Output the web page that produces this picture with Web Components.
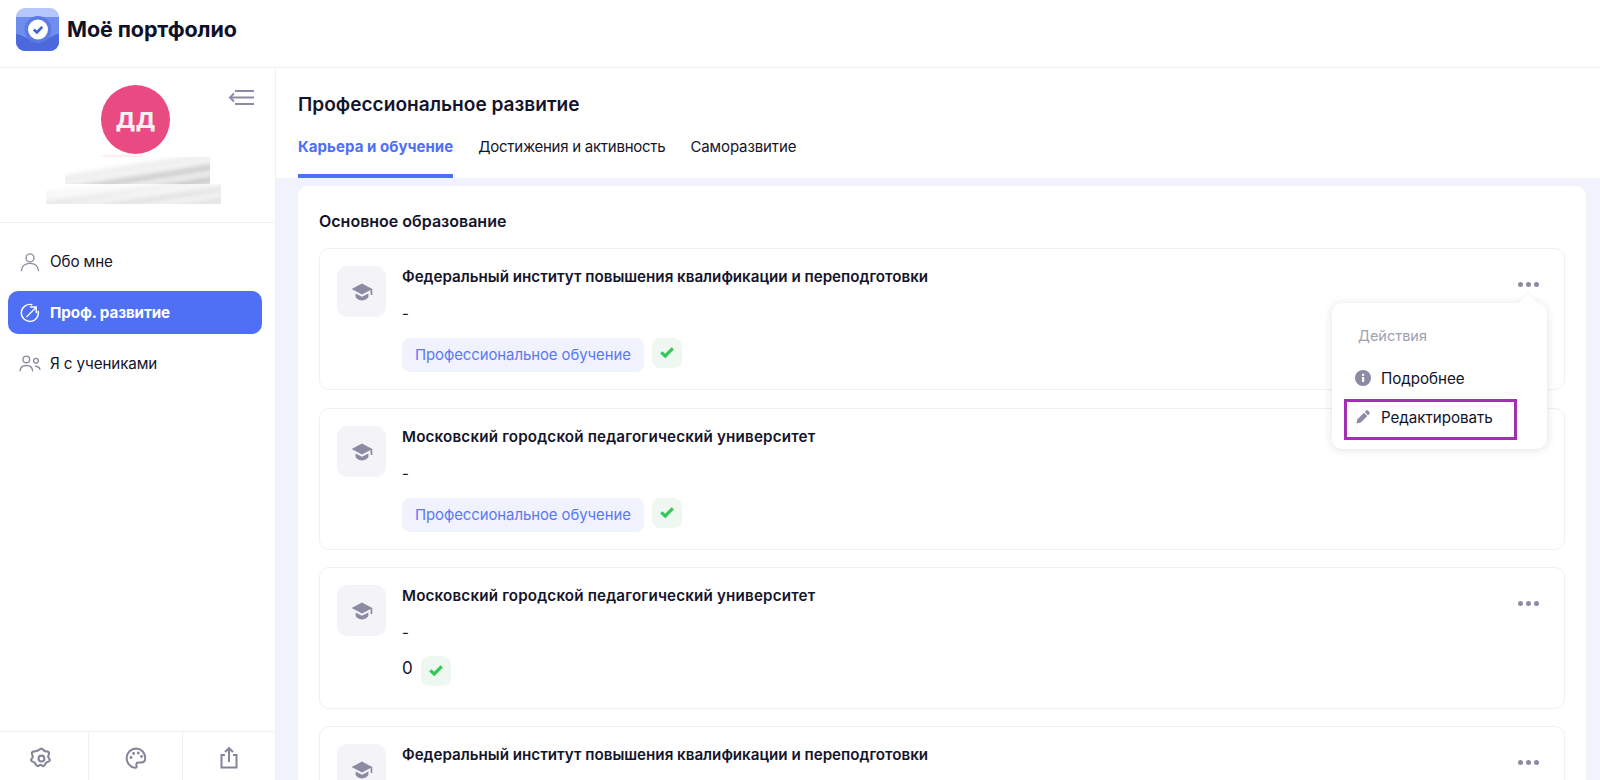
<!DOCTYPE html>
<html lang="ru">
<head>
<meta charset="utf-8">
<title>Моё портфолио</title>
<style>
  html, body { margin: 0; height: 100%; overflow: hidden; }
  body { font-family: Inter, "Noto Sans", sans-serif; color: #14142b; background: #fff; }
</style>
</head>
<body>
<app-shell>
  <top-bar slot="top"></top-bar>
  <side-bar slot="side"></side-bar>
  <page-head slot="head"></page-head>
  <edu-section slot="body" heading="Основное образование">
    <edu-item title-text="Федеральный институт повышения квалификации и переподготовки" tag="Профессиональное обучение" open></edu-item>
    <edu-item title-text="Московский городской педагогический университет" tag="Профессиональное обучение" wide></edu-item>
    <edu-item title-text="Московский городской педагогический университет" plain="0" wide></edu-item>
    <edu-item title-text="Федеральный институт повышения квалификации и переподготовки"></edu-item>
  </edu-section>
</app-shell>

<script>
const CAP = `<svg viewBox="0 0 24 24" width="24" height="24" fill="#8b8ba3"><path d="M12 3.6 1.6 9 12 14.4 20.6 9.9V15h1.7V9L12 3.6Z"/><path d="M5.6 13.4v3.3c0 1 3 3.7 6.4 3.7s6.4-2.7 6.4-3.7v-3.3L12 16.7l-6.4-3.3Z"/></svg>`
const CHECK = `<svg viewBox="0 0 16 16" width="16" height="16"><path d="M2.2 8.4 6.2 12 13.8 4.4" fill="none" stroke="#34c759" stroke-width="3.2"/></svg>`

class AppShell extends HTMLElement {
  constructor () {
    super()
    this.attachShadow({ mode: 'open' }).innerHTML = `
      <style>
        :host { display: grid; grid-template-columns: 275px 1fr; grid-template-rows: 68px 1fr; width: 1600px; height: 780px; overflow: hidden; }
        .top { grid-column: 1 / 3; }
        .side { min-height: 0; }
        main { display: flex; flex-direction: column; min-height: 0; background: #f0f3fc; border-left: 1px solid #eff0f6; overflow: hidden; }
        .body { padding: 8px 14px 0 22px; }
      </style>
      <div class="top"><slot name="top"></slot></div>
      <div class="side"><slot name="side"></slot></div>
      <main>
        <slot name="head"></slot>
        <div class="body"><slot name="body"></slot></div>
      </main>`
  }
}

class TopBar extends HTMLElement {
  constructor () {
    super()
    this.attachShadow({ mode: 'open' }).innerHTML = `
      <style>
        :host { display: flex; align-items: center; gap: 8px; height: 68px; box-sizing: border-box; padding: 0 0 9px 16px; border-bottom: 1px solid #eff0f6; background: #fff; }
        span { font-size: 21.5px; font-weight: 700; letter-spacing: -.1px; color: #0f1029; }
        svg { display: block; }
      </style>
      <svg width="43" height="43" viewBox="0 0 43 43">
        <defs><clipPath id="c"><rect width="43" height="43" rx="9"/></clipPath></defs>
        <g clip-path="url(#c)">
          <rect width="43" height="43" fill="#b4c6fb"/>
          <rect y="9" width="43" height="34" fill="#6e8eef"/>
          <path d="M0 26c6 0 9 6 21.500 6S37 26 43 26v17H0Z" fill="#4b69dc"/>
          <circle cx="22" cy="21.500" r="13.500" fill="#5c79e4"/>
          <circle cx="22" cy="21.500" r="10" fill="#fff"/>
          <path d="M17.800 21.500l3.100 3 5.300-5.600" fill="none" stroke="#3f5fd8" stroke-width="2.600"/>
        </g>
      </svg>
      <span>Моё портфолио</span>`
  }
}

class SideBar extends HTMLElement {
  constructor () {
    super()
    this.attachShadow({ mode: 'open' }).innerHTML = `
      <style>
        :host { display: flex; flex-direction: column; height: 712px; background: #fff; font-size: 15px; }
        .profile { position: relative; display: flex; flex-direction: column; align-items: center; flex: none; height: 137px; padding: 17px 4px 0 0; border-bottom: 1px solid #eff0f6; }
        .avatar { display: flex; align-items: center; justify-content: center; width: 69px; height: 69px; border-radius: 50%; background: #e94a82; color: #f3f0f1; font-size: 22px; font-weight: 800; }
        .collapse { position: absolute; top: 21px; right: 21px; }
        .name { position: relative; width: 175px; height: 50px; margin-top: 1px; }
        .name div { position: absolute; overflow: hidden; }
        .name .a { left: 17px; top: 2px; width: 145px; height: 27px; -webkit-mask-image: linear-gradient(-9deg, #000 30%, transparent 72%); mask-image: linear-gradient(-9deg, #000 30%, transparent 72%); }
        .name .b { left: -2px; top: 29px; width: 175px; height: 20px; -webkit-mask-image: linear-gradient(-5deg, #000 35%, transparent 90%); mask-image: linear-gradient(-5deg, #000 35%, transparent 90%); }
        .name i { position: absolute; inset: -24px -30px; display: block; filter: blur(2.500px); transform: rotate(-9deg); }
        .name .a i { background: repeating-linear-gradient(180deg, #f3f3f3 0 4px, #b0b0b0 4px 7px, #e4e4e4 7px 13px); }
        .name .b i { background: repeating-linear-gradient(180deg, #f5f5f5 0 4px, #d8d8d8 4px 7px, #eeeeee 7px 12px); }
        .name .p { left: 55px; top: 0; width: 40px; height: 2px; background: #fbe6ec; filter: blur(1px); }
        nav { display: flex; flex-direction: column; gap: 8px; flex: 1; padding: 17px 13px 0 8px; }
        .foot { display: grid; grid-template-columns: 89px 94px 1fr; height: 48px; border-top: 1px solid #eff0f6; flex: none; }
        .foot div { display: flex; align-items: center; justify-content: center; padding-top: 4px; border-right: 1px solid #eff0f6; }
        .foot div:last-child { border-right: 0; }
        .foot .gear { padding-right: 5px; }
      </style>
      <div class="profile">
        <div class="avatar">ДД</div>
        <svg class="collapse" width="26" height="17" viewBox="0 0 26 17" fill="none" stroke="#8b8ba3" stroke-width="2"><path d="M7 2h19M2 8.500h24M7 15h19"/><path d="M6 4.500 2 8.500l4 4"/></svg>
        <div class="name"><div class="a"><i></i></div><div class="b"><i></i></div><div class="p"></div></div>
      </div>
      <nav>
        <nav-item label="Обо мне" icon="user"></nav-item>
        <nav-item label="Проф. развитие" icon="growth" active></nav-item>
        <nav-item label="Я с учениками" icon="group"></nav-item>
      </nav>
      <div class="foot">
        <div class="gear"><svg width="25" height="25" viewBox="0 0 24 24" fill="none" stroke="#84849c" stroke-width="2" stroke-linejoin="round"><path d="M12 2.500c1.400 0 2.100 2 3.200 2.400 1.200.5 3.200-.1 3.900 1.100.8 1.300-.7 2.800-.7 4.200 0 1.300 1.800 2.100 1.600 3.600-.2 1.300-2.300 1.300-3.400 2.200-1 .8-1.300 2.900-2.600 3.300-1.200.3-2.100-1.200-3-1.200s-1.800 1.500-3 1.200c-1.300-.4-1.600-2.500-2.600-3.300-1.100-.9-3.200-.9-3.400-2.200-.2-1.500 1.600-2.300 1.600-3.600 0-1.400-1.500-2.900-.7-4.200.7-1.200 2.700-.6 3.900-1.100C9.900 4.500 10.600 2.500 12 2.500Z"/><circle cx="12" cy="12" r="2.800"/></svg></div>
        <div><svg width="24" height="24" viewBox="0 0 24 24" fill="none" stroke="#84849c" stroke-width="2"><path d="M12 2.500a9.700 9.700 0 0 0-1 19.300c1.700.2 2-1.200 1.500-2.300-.7-1.500.1-3 1.800-3h2.700c2.400 0 4.200-1.600 4.200-4.200C21.200 6.500 17 2.500 12 2.500Z"/><g fill="#84849c" stroke="none"><circle cx="7" cy="11.500" r="1.400"/><circle cx="9.600" cy="7.500" r="1.400"/><circle cx="14.300" cy="7" r="1.400"/><circle cx="17.500" cy="10.500" r="1.400"/></g></svg></div>
        <div><svg width="24" height="24" viewBox="0 0 24 24" fill="none" stroke="#84849c" stroke-width="2"><path d="M8 9H4.500v12.500h15V9H16"/><path d="M12 16V2.500M8 6l4-3.800L16 6"/></svg></div>
      </div>`
  }
}

class NavItem extends HTMLElement {
  static icons = {
    user: '<circle cx="12" cy="7.500" r="4.300"/><path d="M2.500 22c.5-5.500 4.500-8.500 9.500-8.500s9 3 9.500 8.500"/>',
    growth: '<path d="M20.800 9.500A9.300 9.300 0 1 1 14.500 3"/><path d="M8 16.500 18.500 6M12 5.500h6.800v6.800"/>',
    group: '<circle cx="8" cy="7" r="3.600"/><path d="M1 20c.3-4.300 3.300-6.300 7-6.300s6.700 2 7 6.300"/><circle cx="18.500" cy="8.500" r="2.600"/><path d="M17.500 14.500c3.200 0 5 1.200 5.500 3.800"/>'
  }

  constructor () {
    super()
    this.attachShadow({ mode: 'open' })
  }

  connectedCallback () {
    const active = this.hasAttribute('active')
    this.shadowRoot.innerHTML = `
      <style>
        :host { display: flex; align-items: center; gap: 9px; height: 43px; padding: 0 11px; border-radius: 10px; font-size: 15.2px; font-weight: ${active ? 700 : 400}; letter-spacing: -.1px; color: ${active ? '#fff' : '#14142b'}; background: ${active ? '#4f6ff5' : 'transparent'}; }
        svg { flex: none; }
      </style>
      <svg width="22" height="22" viewBox="0 0 24 24" fill="none" stroke="${active ? '#fff' : '#8b8ba3'}" stroke-width="1.500">${NavItem.icons[this.getAttribute('icon')]}</svg>
      <span>${this.getAttribute('label')}</span>`
  }
}

class PageHead extends HTMLElement {
  constructor () {
    super()
    this.attachShadow({ mode: 'open' }).innerHTML = `
      <style>
        :host { display: block; height: 110px; box-sizing: border-box; padding: 24px 22px 0; background: #fff; flex: none; }
        h1 { margin: 0; font-size: 19.1px; line-height: 24px; font-weight: 600; color: #14142b; }
        ul { display: flex; gap: 25px; margin: 14px 0 0; padding: 0; list-style: none; }
        li { height: 48px; box-sizing: border-box; padding-top: 7px; font-size: 15px; line-height: 20px; letter-spacing: -.12px; color: #14142b; }
        li.on { color: #4f6ff5; font-weight: 700; letter-spacing: .05px; border-bottom: 4px solid #4f6ff5; }
        li.tight { letter-spacing: -.25px; }
      </style>
      <h1>Профессиональное развитие</h1>
      <ul>
        <li class="on">Карьера и обучение</li>
        <li class="tight">Достижения и активность</li>
        <li>Саморазвитие</li>
      </ul>`
  }
}

class EduSection extends HTMLElement {
  constructor () {
    super()
    this.attachShadow({ mode: 'open' })
  }

  connectedCallback () {
    this.shadowRoot.innerHTML = `
      <style>
        :host { display: block; background: #fff; border-radius: 10px; padding: 26px 21px 0; }
        h2 { margin: 0 0 17px; font-size: 16px; line-height: 19px; font-weight: 600; color: #14142b; }
        div { display: flex; flex-direction: column; gap: 17px; }
      </style>
      <h2>${this.getAttribute('heading')}</h2>
      <div><slot></slot></div>`
  }
}

class EduItem extends HTMLElement {
  constructor () {
    super()
    this.attachShadow({ mode: 'open' })
  }

  connectedCallback () {
    const tag = this.getAttribute('tag')
    const plain = this.getAttribute('plain')
    let meta = ''
    if (tag) meta = `<div class="dash">-</div><div class="meta"><span class="tag">${tag}</span><span class="ok">${CHECK}</span></div>`
    else if (plain) meta = `<div class="dash">-</div><div class="meta plain"><span class="num">${plain}</span><span class="ok">${CHECK}</span></div>`
    this.shadowRoot.innerHTML = `
      <style>
        :host { position: relative; display: flex; gap: 16px; box-sizing: border-box; height: 142px; margin-bottom: ${this.hasAttribute('open') ? 1 : 0}px; padding: 17px 17px 0; background: #fff; border: 1px solid #eff0f6; border-radius: 10px; }
        .ico { display: flex; align-items: center; justify-content: center; flex: none; width: 49px; height: 51px; border-radius: 10px; background: #f3f3f8; }
        .main { flex: 1; min-width: 0; }
        .title { margin-top: 1px; font-size: 15.2px; line-height: 20px; font-weight: 600; letter-spacing: ${this.hasAttribute('wide') ? '.17px' : '-.02px'}; color: #14142b; }
        .dash { margin-top: 17px; font-size: 15px; line-height: 20px; color: #14142b; }
        .meta { display: flex; gap: 8px; align-items: flex-start; margin-top: 14px; }
        .meta.plain { margin-top: 12px; }
        .tag { display: flex; align-items: center; height: 34px; padding: 0 13px; border-radius: 8px; background: #f0f3fe; color: #5b78f0; font-size: 14.9px; letter-spacing: -.05px; }
        .ok { display: flex; align-items: center; justify-content: center; width: 30px; height: 30px; border-radius: 8px; background: #eff8f0; padding-bottom: 2px; box-sizing: border-box; }
        .num { margin-top: 2px; font-size: 17px; line-height: 22px; }
        .plain .ok { margin-top: 1px; }
        .more { position: absolute; top: 33px; right: 25px; display: flex; gap: 3px; }
        .more i { width: 5px; height: 5px; border-radius: 50%; background: #8b8ba3; }
      </style>
      <div class="ico">${CAP}</div>
      <div class="main">
        <div class="title">${this.getAttribute('title-text')}</div>
        ${meta}
      </div>
      <div class="more"><i></i><i></i><i></i></div>
      ${this.hasAttribute('open') ? '<action-menu></action-menu>' : ''}`
  }
}

class ActionMenu extends HTMLElement {
  constructor () {
    super()
    this.attachShadow({ mode: 'open' }).innerHTML = `
      <style>
        :host { position: absolute; z-index: 5; top: 54px; right: 17px; display: block; box-sizing: border-box; width: 215px; height: 146px; padding: 23px 12px 0; background: #fff; border-radius: 10px; box-shadow: 0 1px 10px rgba(30, 30, 70, .13); font-size: 15.2px; color: #14142b; }
        .arrow { position: absolute; top: -7px; right: 12px; width: 14px; height: 14px; background: #fff; transform: rotate(45deg); box-shadow: -1px -1px 2px rgba(30, 30, 70, .05); }
        .cap { position: relative; padding-left: 14px; line-height: 20px; font-size: 14.5px; color: #a0a0b4; }
        .row { position: relative; display: flex; align-items: center; gap: 10px; height: 38px; padding-left: 11px; letter-spacing: -.05px; }
        .first { margin-top: 13px; }
        .second { margin-top: 1px; }
        .mark { position: absolute; left: 0; top: 1px; width: 173px; height: 41px; box-sizing: border-box; border: 3px solid #a32fb4; }
      </style>
      <div class="arrow"></div>
      <div class="cap">Действия</div>
      <div class="row first">
        <svg width="16" height="16" viewBox="0 0 16 16"><circle cx="8" cy="8" r="8" fill="#8b8ba3"/><rect x="7" y="7" width="2.200" height="5" fill="#fff"/><rect x="7" y="3.800" width="2.200" height="2" fill="#fff"/></svg>
        <span>Подробнее</span>
      </div>
      <div class="row second">
        <svg width="16" height="16" viewBox="0 0 16 16" fill="#8b8ba3"><path d="M1.500 14.500 2.500 10.200 9 3.700 12.300 7 5.800 13.500Z"/><path d="M9.800 2.900 11.200 1.500c.5-.4 1.200-.4 1.600 0l1.700 1.700c.4.4.4 1.100 0 1.600L13.100 6.200 9.800 2.900Z"/></svg>
        <span>Редактировать</span>
        <div class="mark"></div>
      </div>`
  }
}

customElements.define('action-menu', ActionMenu)
customElements.define('edu-item', EduItem)
customElements.define('edu-section', EduSection)
customElements.define('page-head', PageHead)
customElements.define('nav-item', NavItem)
customElements.define('side-bar', SideBar)
customElements.define('top-bar', TopBar)
customElements.define('app-shell', AppShell)
</script>
</body>
</html>
